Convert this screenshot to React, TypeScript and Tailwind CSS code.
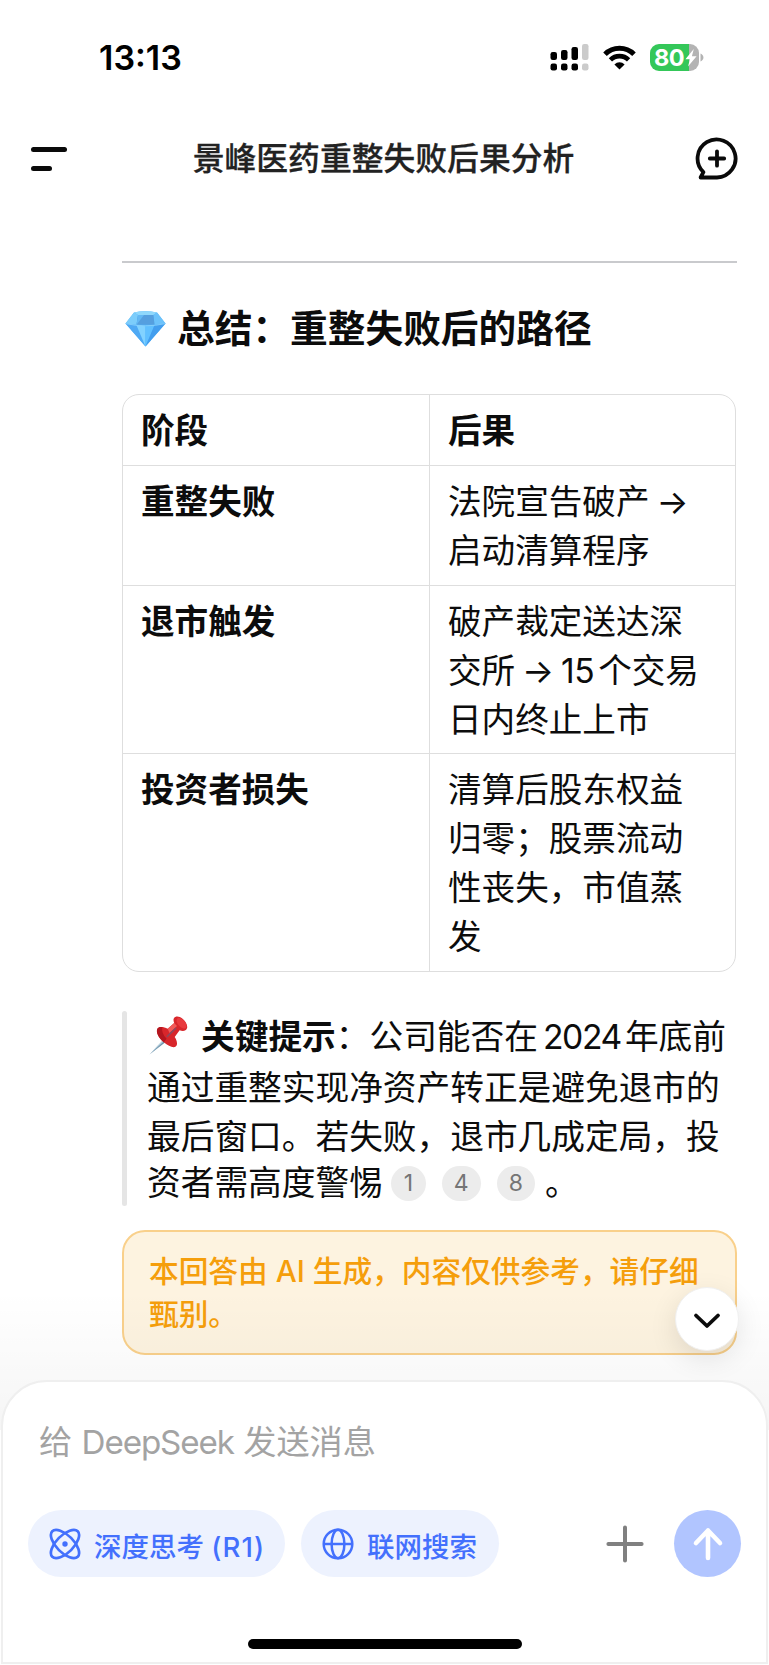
import type { ReactNode } from 'react';

interface TableRow {
  stage: string;
  result: ReactNode[];
}

const rows: TableRow[] = [
  {
    stage: '重整失败',
    result: ['法院宣告破产 →', '启动清算程序'],
  },
  {
    stage: '退市触发',
    result: [
      '破产裁定送达深',
      <>
        交所 → <span className="tracking-[-0.5px]">15</span>
        <span className="ml-1">个交易</span>
      </>,
      '日内终止上市',
    ],
  },
  {
    stage: '投资者损失',
    result: ['清算后股东权益', '归零；股票流动', '性丧失，市值蒸', '发'],
  },
];

function SignalIcon() {
  return (
    <svg width="39" height="27" viewBox="0 0 39 27" className="shrink-0">
      <rect x="0.5" y="8" width="6.5" height="8" rx="2.2" />
      <rect x="11" y="6" width="6.5" height="10" rx="2.2" />
      <rect x="21.5" y="3" width="6.5" height="13" rx="2.2" />
      <rect x="32" y="0" width="6.5" height="16" rx="2.2" fill="#cbcbcb" />
      <rect x="0.5" y="19.5" width="6.5" height="7" rx="2.2" />
      <rect x="11" y="19.5" width="6.5" height="7" rx="2.2" />
      <rect x="21.5" y="19.5" width="6.5" height="7" rx="2.2" />
      <rect x="32" y="19.5" width="6.5" height="7" rx="2.2" fill="#cbcbcb" />
    </svg>
  );
}

function WifiIcon() {
  return (
    <svg width="33" height="25" viewBox="0 0 33 25" className="shrink-0" fill="none" stroke="#000">
      <path d="M2 9.2A20.6 20.6 0 0 1 31 9.2" strokeWidth="5" />
      <path d="M7.4 14.9A12.8 12.8 0 0 1 25.6 14.9" strokeWidth="4.6" />
      <path d="M16.5 24.6L11.4 19.4A7.4 7.4 0 0 1 21.6 19.4Z" fill="#000" stroke="none" />
    </svg>
  );
}

function BatteryIcon() {
  return (
    <div className="flex items-center">
      <div className="relative flex h-[27px] w-[49px] items-center overflow-hidden rounded-[9px] bg-linear-to-r from-[#34c759] from-80% to-[#b3b3b3] to-80% pl-[4px] text-[23.5px] leading-none font-bold text-white">
        <span className="tracking-[-0.5px]">80</span>
        <svg width="12" height="18" viewBox="0 0 12 18" className="absolute top-[5px] left-[35px]" fill="#fff">
          <path d="M8.8 0L0.4 10.2H5L3 17.6L11.6 7.2H6.9Z" />
        </svg>
      </div>
      <svg width="4" height="9" viewBox="0 0 4 9" className="ml-px">
        <path d="M0.5 0.5C4.4 2 4.4 7 0.5 8.5Z" fill="#b3b3b3" />
      </svg>
    </div>
  );
}

function NewChatIcon() {
  return (
    <svg width="44" height="44" viewBox="0 0 44 44" fill="none" stroke="#0a0a0a" strokeWidth="3.8" strokeLinejoin="round" strokeLinecap="round">
      <path d="M22 40.5H5.6L8.4 35.2A19 19 0 1 1 22 40.5Z" />
      <path d="M22 14.3V28.7M14.8 21.5H29.2" />
    </svg>
  );
}

function GemIcon() {
  return (
    <svg width="41" height="36" viewBox="0 0 41 36" className="shrink-0">
      <path d="M9 1.5Q20 -1 32 1.5L40.5 12.6L20.5 35.5L0.5 12.6Z" fill="#4fb4fb" />
      <path d="M9 1.5Q20 -1 32 1.5L28.4 4H13Z" fill="#8fd8fc" />
      <path d="M9 1.5L13 4L11.5 13.8L0.5 12.6Z" fill="#7ccdfb" />
      <path d="M32 1.5L28.4 4L29.5 13.8L40.5 12.6Z" fill="#6cc2fa" />
      <path d="M13 4H28.4L29.5 13.8H11.5Z" fill="#559fdf" />
      <path d="M13 4H19L11.5 13.8Z" fill="#63b8f4" />
      <path d="M0.5 12.6L11.5 14.2L20.5 35.5Z" fill="#4fa9f4" />
      <path d="M11.5 14.2L20.5 15.2V35.5Z" fill="#82d2ff" />
      <path d="M20.5 15.2L29.5 14.2L20.5 35.5Z" fill="#61c0ff" />
      <path d="M29.5 14.2L40.5 12.6L20.5 35.5Z" fill="#439eee" />
      <path d="M0.5 12.6Q20.5 17 40.5 12.6" fill="none" stroke="#8fd3fb" strokeWidth="0.8" />
    </svg>
  );
}

function PushpinIcon() {
  return (
    <svg width="39" height="39" viewBox="0 0 39 39" className="shrink-0">
      <path d="M17.5 20.5L0.5 38.6L20.3 23.2Z" fill="#6f93aa" />
      <path d="M17.5 20.5L0.5 38.6L18.5 22Z" fill="#b9d4e3" />
      <path d="M8.4 12.8C6.7 16 9.5 22 14.8 26.3C19.4 30.3 24.5 32.4 26.7 30.6C29 28.6 28 24.5 25.7 21L30.6 14.3C34 15.6 37 15 38 12.3C39.2 8.8 35.2 3 30.8 1C27.8 -0.3 24.8 0.8 24.5 3.4C24.4 4.7 24.8 6 25.2 7L18.7 12.7C14.5 10.8 10 10.3 8.4 12.8Z" fill="#d8262b" />
      <path d="M8.4 12.8C6.7 16 9.5 22 14.8 26.3L17.6 22.8C14 19 12.6 15 13.2 11.2C10.8 10.9 9.2 11.4 8.4 12.8Z" fill="#b3161f" />
      <ellipse cx="32.6" cy="7.2" rx="3.6" ry="6.4" transform="rotate(-42 32.6 7.2)" fill="#e83a3e" />
      <path d="M18.7 12.7L25.2 7L28 10L20.5 17Z" fill="#f15a58" />
      <path d="M17.8 20.8L27 12" stroke="#8a4a60" strokeWidth="1.6" />
    </svg>
  );
}

function AtomIcon() {
  return (
    <svg width="32" height="32" viewBox="0 0 32 32" className="shrink-0" fill="none" stroke="#4370fd" strokeWidth="2.7">
      <ellipse cx="16" cy="16" rx="18" ry="8.6" transform="rotate(45 16 16)" />
      <ellipse cx="16" cy="16" rx="18" ry="8.6" transform="rotate(-45 16 16)" />
      <circle cx="16" cy="16" r="2.7" fill="#4370fd" stroke="none" />
    </svg>
  );
}

function GlobeIcon() {
  return (
    <svg width="32" height="32" viewBox="0 0 32 32" className="shrink-0" fill="none" stroke="#4370fd" strokeWidth="2.5">
      <circle cx="16" cy="16" r="14.3" />
      <ellipse cx="16" cy="16" rx="6.4" ry="14.3" />
      <path d="M1.7 16H30.3" />
    </svg>
  );
}

function Citation({ children }: { children: ReactNode }) {
  return (
    <span className="flex h-[35px] min-w-[35px] items-center justify-center rounded-full bg-[#ececec] px-[12px] text-[23px] leading-none text-[#757575]">
      {children}
    </span>
  );
}

function StatusBar() {
  return (
    <div className="flex h-[115px] items-center pl-[99px]">
      <div className="w-[451px] pt-px text-[34px] leading-none font-semibold text-black">13:13</div>
      <SignalIcon />
      <div className="ml-[14px]">
        <WifiIcon />
      </div>
      <div className="ml-[14px]">
        <BatteryIcon />
      </div>
    </div>
  );
}

function Header() {
  return (
    <header className="flex h-[88px] items-center justify-between pr-[30px] pl-[31px]">
      <div className="flex w-[41px] flex-col gap-[14px]">
        <span className="h-[5px] w-[36px] rounded-full bg-[#0a0a0a]" />
        <span className="h-[5px] w-[21px] rounded-full bg-[#0a0a0a]" />
      </div>
      <h1 className="text-[31.8px] leading-none font-medium text-[#222] [-webkit-text-stroke:0.3px_#222]">
        景峰医药重整失败后果分析
      </h1>
      <NewChatIcon />
    </header>
  );
}

function SummaryTable() {
  return (
    <div className="mt-[42px] w-[614px] overflow-hidden rounded-[17px] border border-[#dedede] text-[33.6px] leading-[49px] text-[#0c0c0c]">
      <div className="flex font-semibold">
        <div className="w-[306px] pt-[11px] pb-[10px] pl-[18px]">阶段</div>
        <div className="flex-1 border-l border-[#dedede] pt-[11px] pb-[10px] pl-[18px]">后果</div>
      </div>
      {rows.map((row) => (
        <div key={row.stage} className="flex border-t border-[#dedede]">
          <div className="w-[306px] pt-[11px] pb-[9.5px] pl-[18px] font-semibold">{row.stage}</div>
          <div className="flex-1 border-l border-[#dedede] pt-[11px] pb-[9.5px] pl-[18px] whitespace-nowrap [word-spacing:-2.5px]">
            {row.result.map((line, index) => (
              <div key={index}>{line}</div>
            ))}
          </div>
        </div>
      ))}
    </div>
  );
}

function KeyNote() {
  return (
    <div className="mt-[39.5px] flex h-[195px] text-[33.7px] whitespace-nowrap text-[#0c0c0c]">
      <div className="w-[5px] rounded-full bg-[#e5e5e5]" />
      <div className="pl-[20px]">
        <div className="flex h-[51px] items-center leading-none">
          <span className="mr-[13px] ml-[2px] pb-[2px]">
            <PushpinIcon />
          </span>
          <span className="font-semibold">关键提示</span>
          <span>：公司能否在</span>
          <span className="mr-[4px] ml-[5px] tracking-[-1.4px]">2024</span>
          <span>年底前</span>
        </div>
        <div className="mt-px h-[50px] leading-[50px]">通过重整实现净资产转正是避免退市的</div>
        <div className="h-[47px] leading-[48px]">最后窗口。若失败，退市几成定局，投</div>
        <div className="flex h-[46px] items-center leading-none">
          <span>资者需高度警惕</span>
          <span className="mr-[10px] ml-[8px] flex gap-[16px]">
            <Citation>1</Citation>
            <Citation>4</Citation>
            <Citation>8</Citation>
          </span>
          <span>。</span>
        </div>
      </div>
    </div>
  );
}

function Disclaimer() {
  return (
    <div className="mt-[24px] h-[125px] w-[615px] rounded-[23px] border-2 border-[#f9d08b] bg-[#fdf3e0] pt-[18px] pl-[25px] text-[29.7px] leading-[43px] font-medium whitespace-nowrap text-[#f59e0b]">
      <div>本回答由 AI 生成，内容仅供参考，请仔细</div>
      <div>甄别。</div>
    </div>
  );
}

function Composer() {
  return (
    <div className="mx-px h-[284px] rounded-t-[46px] border-2 border-[#efefef] bg-white">
      <div className="pt-[36px] pl-[36px] text-[33.2px] leading-[48px] text-[#a3a3a3]">
        给 <span className="tracking-[-1.1px]">DeepSeek</span> 发送消息
      </div>
      <div className="mt-[44px] flex items-center pl-[25px] text-[27.5px] leading-none font-medium text-[#4370fd]">
        <div className="flex h-[67px] w-[257px] items-center rounded-full bg-[#edf2fe] pl-[21px]">
          <AtomIcon />
          <span className="mt-[9px] ml-[13px] whitespace-nowrap">
            深度思考 <span className="tracking-[1.1px]">(R1)</span>
          </span>
        </div>
        <div className="ml-[16px] flex h-[67px] w-[198px] items-center rounded-full bg-[#edf2fe] pl-[21px]">
          <GlobeIcon />
          <span className="mt-[9px] ml-[13px]">联网搜索</span>
        </div>
        <svg width="38" height="38" viewBox="0 0 38 38" className="ml-[107px]" stroke="#808080" strokeWidth="4" strokeLinecap="round">
          <path d="M19 2.4V35.6M2.4 19H35.6" />
        </svg>
        <div className="ml-[30px] flex size-[67px] items-center justify-center rounded-full bg-[#b1c5ff]">
          <svg width="32" height="34" viewBox="0 0 32 34" fill="none" stroke="#fff" strokeWidth="4.6" strokeLinecap="round" strokeLinejoin="round">
            <path d="M16 31V3.5M4 16L16 3.5L28 16" />
          </svg>
        </div>
      </div>
      <div className="mt-[62px] ml-[245px] h-[10px] w-[274px] rounded-full bg-black" />
    </div>
  );
}

export default function App() {
  return (
    <div className="relative h-[1665px] w-[769px] overflow-hidden bg-white font-['Inter','Noto_Sans_CJK_SC',sans-serif]">
      <StatusBar />
      <Header />
      <main className="h-[1177px] pl-[122px]">
        <div className="pt-[58px]">
          <div className="h-[2px] w-[615px] bg-[#c9cacd]" />
        </div>
        <h2 className="mt-[42px] flex h-[47px] items-center pl-[3px] text-[37.7px] leading-none font-semibold text-[#0c0c0c]">
          <GemIcon />
          <span className="ml-[11px]">总结：重整失败后的路径</span>
        </h2>
        <SummaryTable />
        <KeyNote />
        <Disclaimer />
      </main>
      <div className="pointer-events-none absolute top-[1290px] left-0 h-[140px] w-full bg-linear-to-b from-black/0 to-black/4" />
      <div className="absolute top-[1287px] left-[675px] flex size-[64px] items-center justify-center rounded-full border border-[#f0f0f0] bg-white shadow-[0_8px_28px_rgba(0,0,0,0.1)]">
        <svg width="28" height="18" viewBox="0 0 28 18" fill="none" stroke="#0c0c0c" strokeWidth="3.8" strokeLinecap="round" strokeLinejoin="round" className="mt-[4px]">
          <path d="M3 3.5L14 14L25 3.5" />
        </svg>
      </div>
      <div className="relative">
        <Composer />
      </div>
    </div>
  );
}
